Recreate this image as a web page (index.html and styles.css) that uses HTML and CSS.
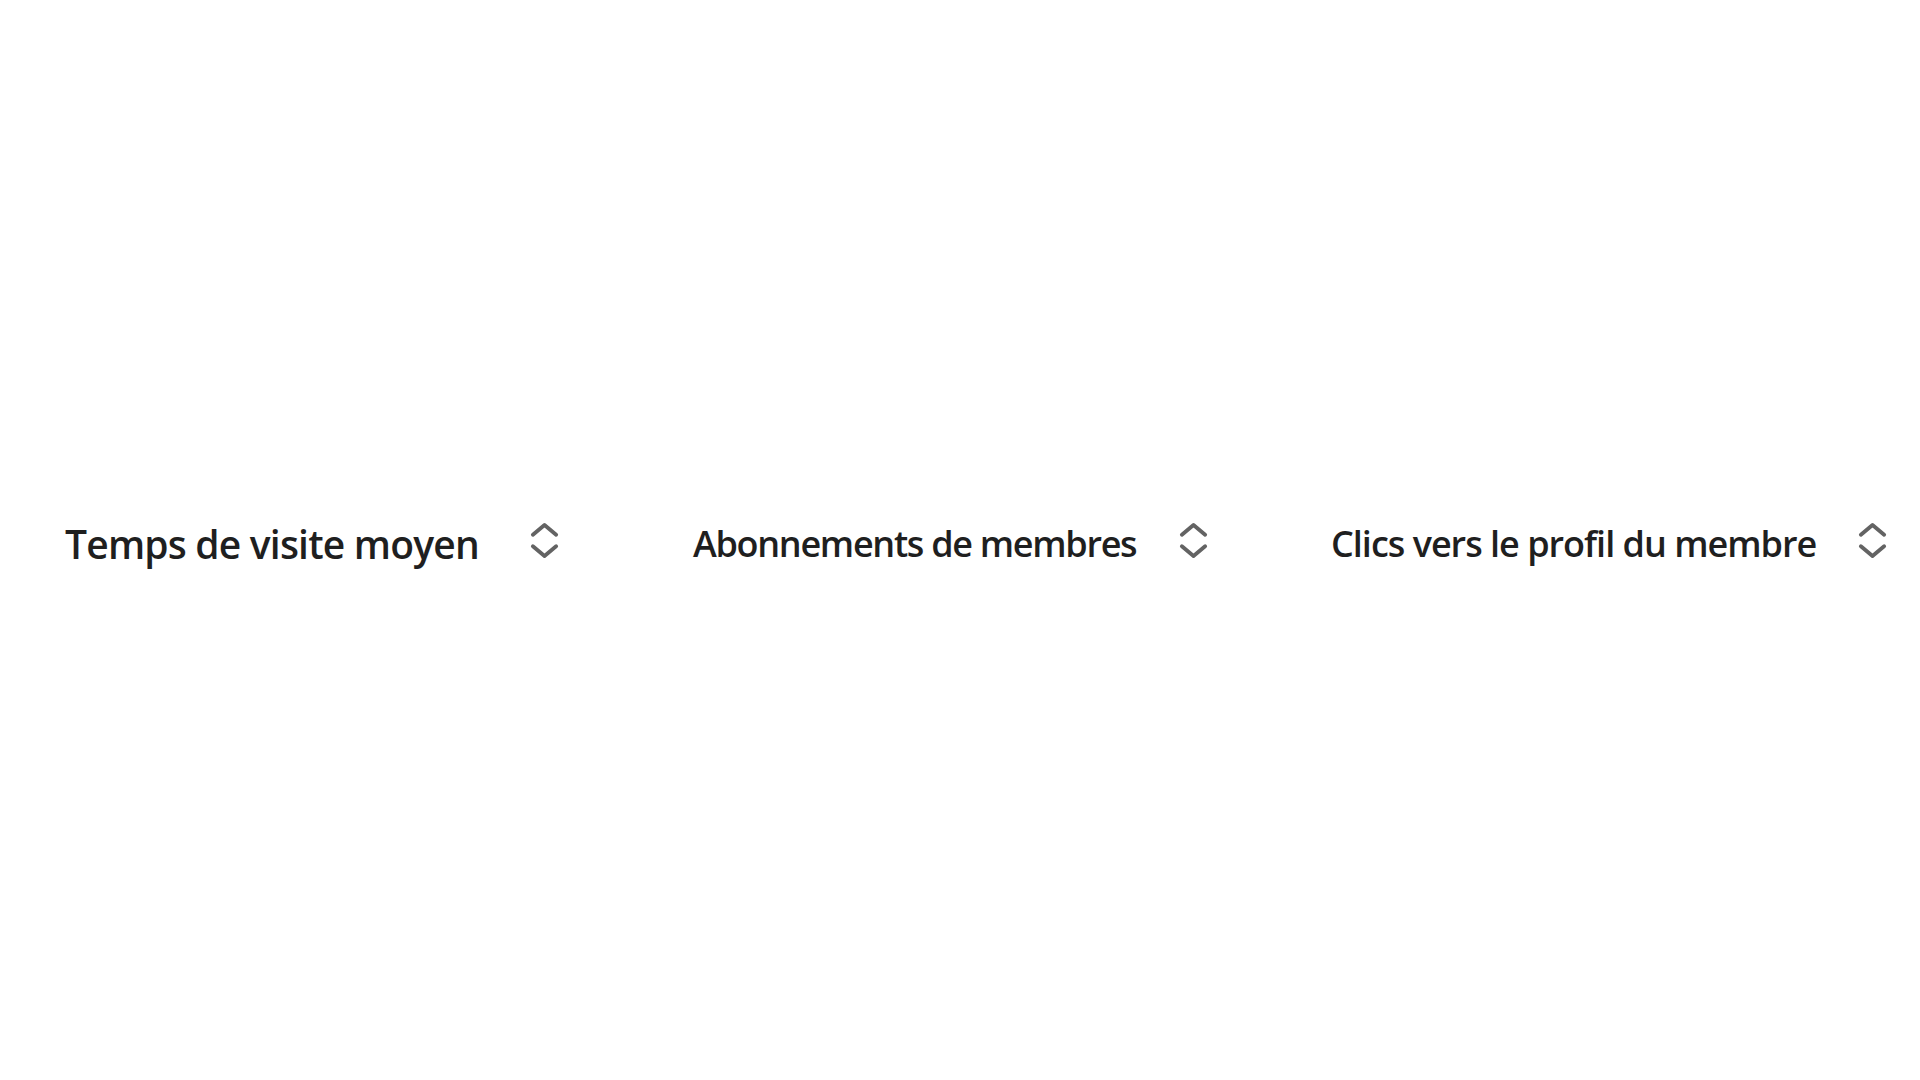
FILE: index.html
```html
<!DOCTYPE html>
<html lang="fr">
<head>
<meta charset="utf-8">
<title>Statistiques des membres</title>
<link rel="stylesheet" href="styles.css">
</head>
<body>
<div class="page">
  <div class="header-row">
    <div class="col col-visit">
      <span class="label label-lg">Temps de visite moyen</span>
      <svg class="sort" viewBox="0 0 32 42" aria-hidden="true">
        <polyline points="4,15 16,5 28,15"/>
        <polyline points="4,27 16,37 28,27"/>
      </svg>
    </div>
    <div class="col col-subs">
      <span class="label label-subs">Abonnements de membres</span>
      <svg class="sort" viewBox="0 0 32 42" aria-hidden="true">
        <polyline points="4,15 16,5 28,15"/>
        <polyline points="4,27 16,37 28,27"/>
      </svg>
    </div>
    <div class="col col-clicks">
      <span class="label label-clicks">Clics vers le profil du membre</span>
      <svg class="sort" viewBox="0 0 32 42" aria-hidden="true">
        <polyline points="4,15 16,5 28,15"/>
        <polyline points="4,27 16,37 28,27"/>
      </svg>
    </div>
  </div>
</div>
</body>
</html>
```

FILE: styles.css
```css
html, body {
  margin: 0;
  padding: 0;
  background: #ffffff;
}

.page {
  width: 1920px;
  height: 1080px;
  padding-top: 518px;
  box-sizing: border-box;
  font-family: "Open Sans", "Noto Sans", sans-serif;
  color: #1f1f1f;
}

.header-row {
  display: flex;
  align-items: center;
  padding-left: 65px;
  height: 50px;
}

.col {
  display: flex;
  align-items: center;
}

.col-visit { width: 628px; }
.col-subs { width: 638px; }
.col-clicks { width: 589px; }

.label {
  font-size: 36px;
  font-weight: 600;
  white-space: nowrap;
}

.label-lg {
  font-size: 39px;
  letter-spacing: -0.8px;
}

.label-subs { letter-spacing: -1.3px; }
.label-clicks { letter-spacing: -1px; }

.col-visit .sort { margin-left: 50px; }
.col-subs .sort { margin-left: 42px; }
.col-clicks .sort { margin-left: 41px; }

.sort {
  width: 31px;
  height: 41px;
  margin-bottom: 6px;
  flex: none;
  fill: none;
  stroke: #636363;
  stroke-width: 4;
  stroke-linecap: round;
  stroke-linejoin: round;
}
```
